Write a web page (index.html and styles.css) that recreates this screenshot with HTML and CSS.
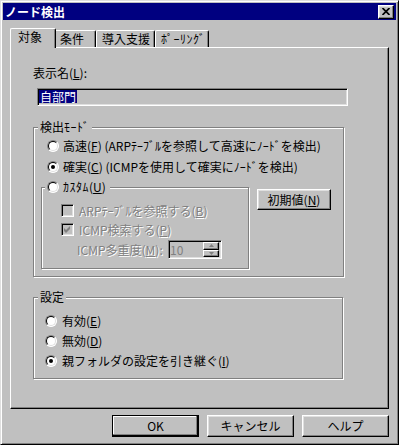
FILE: index.html
```html
<!DOCTYPE html>
<html lang="ja">
<head>
<meta charset="utf-8">
<title>ノード検出</title>
<link rel="stylesheet" href="styles.css">
</head>
<body>
<div class="window">
  <div class="titlebar">
    <span class="title">ノード検出</span>
    <span class="close"><svg width="8" height="7" viewBox="0 0 8 7"><path d="M0.5 0 L7.5 7 M7.5 0 L0.5 7" stroke="#000" stroke-width="1.7" fill="none"/></svg></span>
  </div>
  <div class="content">
    <div class="tabs">
      <div class="tab active">対象</div>
      <div class="tab t2">条件</div>
      <div class="tab t3">導入支援</div>
      <div class="tab t4"><span class="hk">ﾎﾟｰﾘﾝｸﾞ</span></div>
    </div>
    <div class="panel">
      <div class="label">表示名(<u>L</u>):</div>
      <div class="textbox"><span class="sel">自部門</span></div>
      <div class="group g1">
        <div class="gtitle">検出<span class="hk">ﾓｰﾄﾞ</span></div>
        <div class="row r1"><span class="radio"></span><span>高速(<u>F</u>) (ARPﾃｰﾌﾞﾙを参照して高速にﾉｰﾄﾞを検出)</span></div>
        <div class="row r2"><span class="radio on"></span><span>確実(<u>C</u>) (ICMPを使用して確実にﾉｰﾄﾞを検出)</span></div>
        <div class="custom-row">
          <div class="group ginner">
            <div class="gtitle rtitle"><span class="radio"></span><span><span class="hk">ｶｽﾀﾑ</span>(<u>U</u>)</span></div>
            <div class="crow c1"><span class="check"></span><span class="disabled">ARPﾃｰﾌﾞﾙを参照する(<u>B</u>)</span></div>
            <div class="crow c2"><span class="check"><svg width="7" height="7" viewBox="0 0 7 7"><polygon points="0,2 2,4 6,0 6,3 2,7 0,5" fill="#808080"/></svg></span><span class="disabled">ICMP検索する(<u>P</u>)</span></div>
            <div class="spin-row">
              <span class="spin-label disabled">ICMP多重度(<u>M</u>):</span>
              <div class="spin">
                <span class="spin-val">10</span>
                <div class="spin-btns">
                  <span class="sbtn up"><svg width="5" height="3" viewBox="0 0 5 3"><polygon points="2.5,0 5,3 0,3" fill="#808080"/></svg></span>
                  <span class="sbtn down"><svg width="5" height="3" viewBox="0 0 5 3"><polygon points="0,0 5,0 2.5,3" fill="#808080"/></svg></span>
                </div>
              </div>
            </div>
          </div>
          <div class="btn init">初期値(<u>N</u>)</div>
        </div>
      </div>
      <div class="group g2">
        <div class="gtitle">設定</div>
        <div class="row s1"><span class="radio"></span><span>有効(<u>E</u>)</span></div>
        <div class="row s2"><span class="radio"></span><span>無効(<u>D</u>)</span></div>
        <div class="row s3"><span class="radio on"></span><span>親フォルダの設定を引き継ぐ(<u>I</u>)</span></div>
      </div>
    </div>
    <div class="buttons">
      <div class="btn bottom default">OK</div>
      <div class="btn bottom">キャンセル</div>
      <div class="btn bottom">ヘルプ</div>
    </div>
  </div>
</div>
</body>
</html>
```

FILE: styles.css
```css
* { box-sizing: border-box; }

html, body {
  margin: 0;
  padding: 0;
}

body {
  width: 399px;
  height: 445px;
  overflow: hidden;
  background: #c0c0c0;
  font-family: "Noto Sans CJK JP", "MS UI Gothic", sans-serif;
  font-size: 12px;
  line-height: 14px;
  color: #000;
}

u { text-underline-offset: 1px; }

.hk { letter-spacing: 0.5px; }

.window {
  width: 399px;
  height: 445px;
  background: #c0c0c0;
  border: 1px solid;
  border-color: #dfdfdf #000 #000 #dfdfdf;
  box-shadow: inset 1px 1px 0 #fff, inset -1px -1px 0 #808080;
  padding: 2px;
  display: flex;
  flex-direction: column;
}

.titlebar {
  height: 17px;
  background: #000080;
  display: flex;
  align-items: center;
  padding: 0 2px 0 2px;
  flex: none;
}

.title {
  color: #fff;
  font-weight: bold;
  font-size: 12px;
  line-height: 17px;
}

.close {
  margin-left: auto;
  width: 16px;
  height: 14px;
  background: #c0c0c0;
  border: 1px solid;
  border-color: #fff #000 #000 #fff;
  box-shadow: inset -1px -1px 0 #808080, inset 1px 1px 0 #dfdfdf;
  display: flex;
  align-items: center;
  justify-content: center;
  padding: 0 1px 1px 0;
}

.close svg { display: block; }

.content {
  flex: 1;
  display: flex;
  flex-direction: column;
  padding: 0 7px;
}

/* Tabs */
.tabs {
  display: flex;
  align-items: flex-end;
  margin-top: 8px;
  height: 19px;
  flex: none;
}

.tab {
  height: 17px;
  border-top: 1px solid #fff;
  border-left: 1px solid #fff;
  border-right: 1px solid #000;
  border-radius: 2px 2px 0 0;
  box-shadow: inset -1px 0 0 #808080;
  padding: 1px 0 0 5px;
  white-space: nowrap;
  background: #c0c0c0;
}

.tab.active {
  position: relative;
  z-index: 1;
  width: 46px;
  height: 20px;
  margin-bottom: -1px;
  margin-right: -2px;
  padding: 1px 0 0 7px;
}

.tab.t2 { width: 42px; }
.tab.t3 { width: 59px; }
.tab.t4 { width: 54px; }

/* Panel */
.panel {
  width: 379px;
  height: 362px;
  flex: none;
  border-top: 1px solid #fff;
  border-left: 1px solid #fff;
  border-right: 1px solid #000;
  border-bottom: 1px solid #000;
  box-shadow: inset -1px -1px 0 #808080;
  padding: 18px 0 0 22px;
}

.label {
  height: 14px;
}

.textbox {
  margin: 8px 0 0 4px;
  width: 311px;
  height: 18px;
  border: 1px solid;
  border-color: #808080 #fff #fff #808080;
  box-shadow: inset 1px 1px 0 #000, inset -1px -1px 0 #dfdfdf;
  padding: 1px;
  display: flex;
  align-items: flex-start;
}

.sel {
  background: #000080;
  color: #fff;
  height: 13px;
  line-height: 13px;
  padding: 0 1px;
}

/* Group boxes */
.group {
  border: 1px solid #808080;
  box-shadow: 1px 1px 0 #fff, inset 1px 1px 0 #fff;
}

.gtitle {
  width: fit-content;
  height: 14px;
  margin: -8px 0 0 4px;
  padding: 0 2px;
  background: #c0c0c0;
  white-space: nowrap;
}

.g1 {
  margin-top: 21px;
  width: 311px;
  height: 150px;
}

.g2 {
  margin-top: 20px;
  width: 310px;
  height: 82px;
}

.row {
  display: flex;
  align-items: center;
  gap: 4px;
  height: 14px;
  white-space: nowrap;
}

.r1 { margin: 5px 0 0 13px; }
.r2 { margin: 7px 0 0 13px; }

.s1 { margin: 10px 0 0 11px; gap: 5px; }
.s2 { margin: 6px 0 0 11px; gap: 5px; }
.s3 { margin: 6px 0 0 11px; gap: 5px; }

.radio {
  flex: none;
  position: relative;
  width: 12px;
  height: 12px;
  border-radius: 50%;
  border: 1px solid;
  border-color: #808080 #fff #fff #808080;
  background: #fff;
}

.radio::before {
  content: "";
  position: absolute;
  inset: 0;
  border-radius: 50%;
  border: 1px solid;
  border-color: #000 #dfdfdf #dfdfdf #000;
}

.radio.on::after {
  content: "";
  position: absolute;
  left: 3px;
  top: 3px;
  width: 4px;
  height: 4px;
  border-radius: 50%;
  background: #000;
}

.custom-row {
  display: flex;
  align-items: flex-start;
  margin-top: 13px;
}

.ginner {
  margin-left: 7px;
  width: 208px;
  height: 82px;
}

.rtitle {
  display: flex;
  align-items: center;
  gap: 4px;
  margin-left: 3px;
  padding: 0 4px 0 2px;
}

.crow {
  display: flex;
  align-items: center;
  gap: 5px;
  height: 13px;
  line-height: 13px;
  margin-left: 19px;
  white-space: nowrap;
}

.c1 { margin-top: 10px; }
.c2 { margin-top: 6px; }

.check {
  flex: none;
  width: 13px;
  height: 13px;
  border: 1px solid;
  border-color: #808080 #fff #fff #808080;
  box-shadow: inset 1px 1px 0 #000, inset -1px -1px 0 #dfdfdf;
  background: #c0c0c0;
  display: flex;
  align-items: center;
  justify-content: center;
}

.check svg { display: block; }

.disabled {
  color: #808080;
  text-shadow: 1px 1px 0 #fff;
}

.spin-row {
  display: flex;
  align-items: center;
  margin-top: 4px;
  height: 19px;
}

.spin-label {
  margin-left: 35px;
  width: 91px;
  white-space: nowrap;
}

.spin {
  width: 54px;
  height: 19px;
  border: 1px solid;
  border-color: #808080 #fff #fff #808080;
  box-shadow: inset 1px 1px 0 #000, inset -1px -1px 0 #dfdfdf;
  padding: 1px 2px 1px 1px;
  display: flex;
  align-items: stretch;
}

.spin-val {
  flex: 1;
  color: #808080;
  line-height: 15px;
}

.spin-btns {
  width: 16px;
  display: flex;
  flex-direction: column;
}

.sbtn {
  flex: 1;
  border: 1px solid;
  border-color: #fff #000 #000 #fff;
  box-shadow: inset -1px -1px 0 #808080;
  display: flex;
  align-items: center;
  justify-content: center;
}

.sbtn svg { display: block; }

/* Buttons */
.btn {
  display: flex;
  align-items: center;
  justify-content: center;
  border: 1px solid;
  border-color: #fff #000 #000 #fff;
  box-shadow: inset -1px -1px 0 #808080, inset 1px 1px 0 #dfdfdf;
  background: #c0c0c0;
  white-space: nowrap;
}

.init {
  margin: 2px 0 0 8px;
  width: 74px;
  height: 21px;
}

.buttons {
  display: flex;
  justify-content: flex-end;
  gap: 8px;
  margin-top: 6px;
}

.btn.bottom {
  width: 87px;
  height: 22px;
}

.btn.default {
  border-color: #000;
  box-shadow: inset -1px -1px 0 #000, inset -2px -2px 0 #808080, inset 1px 1px 0 #fff;
}
```
